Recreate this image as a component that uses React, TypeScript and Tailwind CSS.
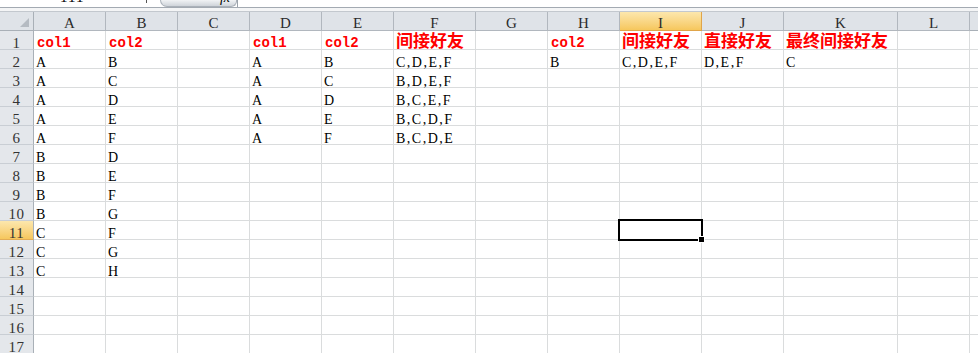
import React from "react";

const COLS = ["A", "B", "C", "D", "E", "F", "G", "H", "I", "J", "K", "L"];

type Val = string | undefined;

const data: Record<number, Val[]> = {
  2: ["A", "B", "", "A", "B", "C,D,E,F", "", "B", "C,D,E,F", "D,E,F", "C", ""],
  3: ["A", "C", "", "A", "C", "B,D,E,F"],
  4: ["A", "D", "", "A", "D", "B,C,E,F"],
  5: ["A", "E", "", "A", "E", "B,C,D,F"],
  6: ["A", "F", "", "A", "F", "B,C,D,E"],
  7: ["B", "D"],
  8: ["B", "E"],
  9: ["B", "F"],
  10: ["B", "G"],
  11: ["C", "F"],
  12: ["C", "G"],
  13: ["C", "H"],
};

const header: Val[] = ["col1", "col2", "", "col1", "col2", "间接好友", "", "col2", "间接好友", "直接好友", "最终间接好友", ""];

const isCJK = (s: string) => /[\u4e00-\u9fff]/.test(s);

function HeaderCell({ v }: { v: Val }) {
  if (!v) return null;
  if (isCJK(v)) {
    return (
      <span className="pl-[2px] font-['Noto_Sans_CJK_SC',sans-serif] text-[17px] font-bold leading-[18px] text-[#ff0000] whitespace-nowrap">
        {v}
      </span>
    );
  }
  return (
    <span className="pl-[3px] font-['Liberation_Mono',monospace] text-[14px] font-bold leading-[11.5px] text-[#ff0000] whitespace-nowrap">
      {v}
    </span>
  );
}

function DataCell({ v }: { v: Val }) {
  if (!v) return null;
  return (
    <span className="pl-[2px] font-['Liberation_Serif',serif] text-[14px] leading-[11.5px] tracking-[1.5px] text-black whitespace-nowrap">
      {v}
    </span>
  );
}

export default function App() {
  const rows = Array.from({ length: 17 }, (_, i) => i + 1);
  return (
    <div className="relative w-[978px] h-[353px] overflow-hidden bg-white font-['Liberation_Serif',serif]">
      {/* formula bar remnant */}
      <div className="h-[7px] flex overflow-hidden bg-white">
        <div className="w-[160px] flex items-start">
          <span className="ml-[60px] mt-[-10px] font-['Liberation_Serif',serif] text-[15px] leading-[15px] tracking-[1px] text-black">111</span>
          <span className="ml-[62px] w-[5px] h-[3px] border-l border-[#555]" />
        </div>
        <div className="w-[77px] h-[7px] rounded-b-[10px] rounded-bl-[12px] border border-t-0 border-[#aab1b9] bg-gradient-to-b from-[#f1f3f5] to-[#cfd4da] flex justify-end items-start pr-[6px]">
          <span className="mt-[-9px] font-['Liberation_Serif',serif] italic text-[14px] leading-[14px] text-black">fx</span>
        </div>
        <div className="flex-1 border-l border-[#9ba3ab]" />
      </div>
      <div className="h-[1px] bg-[#a3aab2]" />
      <div className="h-[4px] bg-[#f4f5f6] border-b border-[#c3c8ce]" />

      {/* sheet grid */}
      <div className="grid grid-cols-[34px_72px_72px_72px_72px_72px_82px_72px_72px_82px_82px_114px_72px_8px] auto-rows-[19px]">
        {/* column header row */}
        <div className="relative bg-[#dfe3e8] border-r border-b border-[#a9b0b7]">
          <svg className="absolute right-[4px] bottom-[3px]" width="9" height="9" viewBox="0 0 9 9">
            <polygon points="9,0 9,9 0,9" fill="#b5bbc2" />
          </svg>
        </div>
        {COLS.map((c) => (
          <div
            key={c}
            className={
              c === "I"
                ? "flex items-end justify-center border-r border-b border-[#e0a54a] bg-gradient-to-b from-[#fce7ad] to-[#f6c75c]"
                : "flex items-end justify-center border-r border-b border-[#b1b7be] bg-[#dfe3e8]"
            }
          >
            <span className="text-[15px] leading-[13.5px] text-[#2b2b2b]">{c}</span>
          </div>
        ))}
        <div className="bg-[#dfe3e8] border-b border-[#a9b0b7]" />

        {rows.map((r) => (
          <React.Fragment key={r}>
            <div
              className={
                r === 11
                  ? "flex items-end justify-center border-r border-b border-r-[#a9b0b7] border-b-[#e3ad55] bg-gradient-to-b from-[#fce7ad] to-[#f6c75c]"
                  : "flex items-end justify-center border-r border-b border-r-[#a9b0b7] border-b-[#c9ced4] bg-[#e4e7eb]"
              }
            >
              <span className="text-[15px] leading-[12.5px] tracking-[0.5px] text-[#333333]">{r}</span>
            </div>
            {COLS.map((c, ci) => (
              <div key={c} className="flex items-end overflow-visible border-r border-b border-[#dadcdd]">
                {r === 1 ? <HeaderCell v={header[ci]} /> : <DataCell v={data[r]?.[ci]} />}
              </div>
            ))}
            <div className="border-b border-[#dadcdd]" />
          </React.Fragment>
        ))}
      </div>

      {/* active cell selection I11 */}
      <div className="absolute left-[618px] top-[219px] w-[85px] h-[22px] border-2 border-black" />
      <div className="absolute left-[698px] top-[236px] w-[7px] h-[7px] bg-black border border-white" />
    </div>
  );
}
